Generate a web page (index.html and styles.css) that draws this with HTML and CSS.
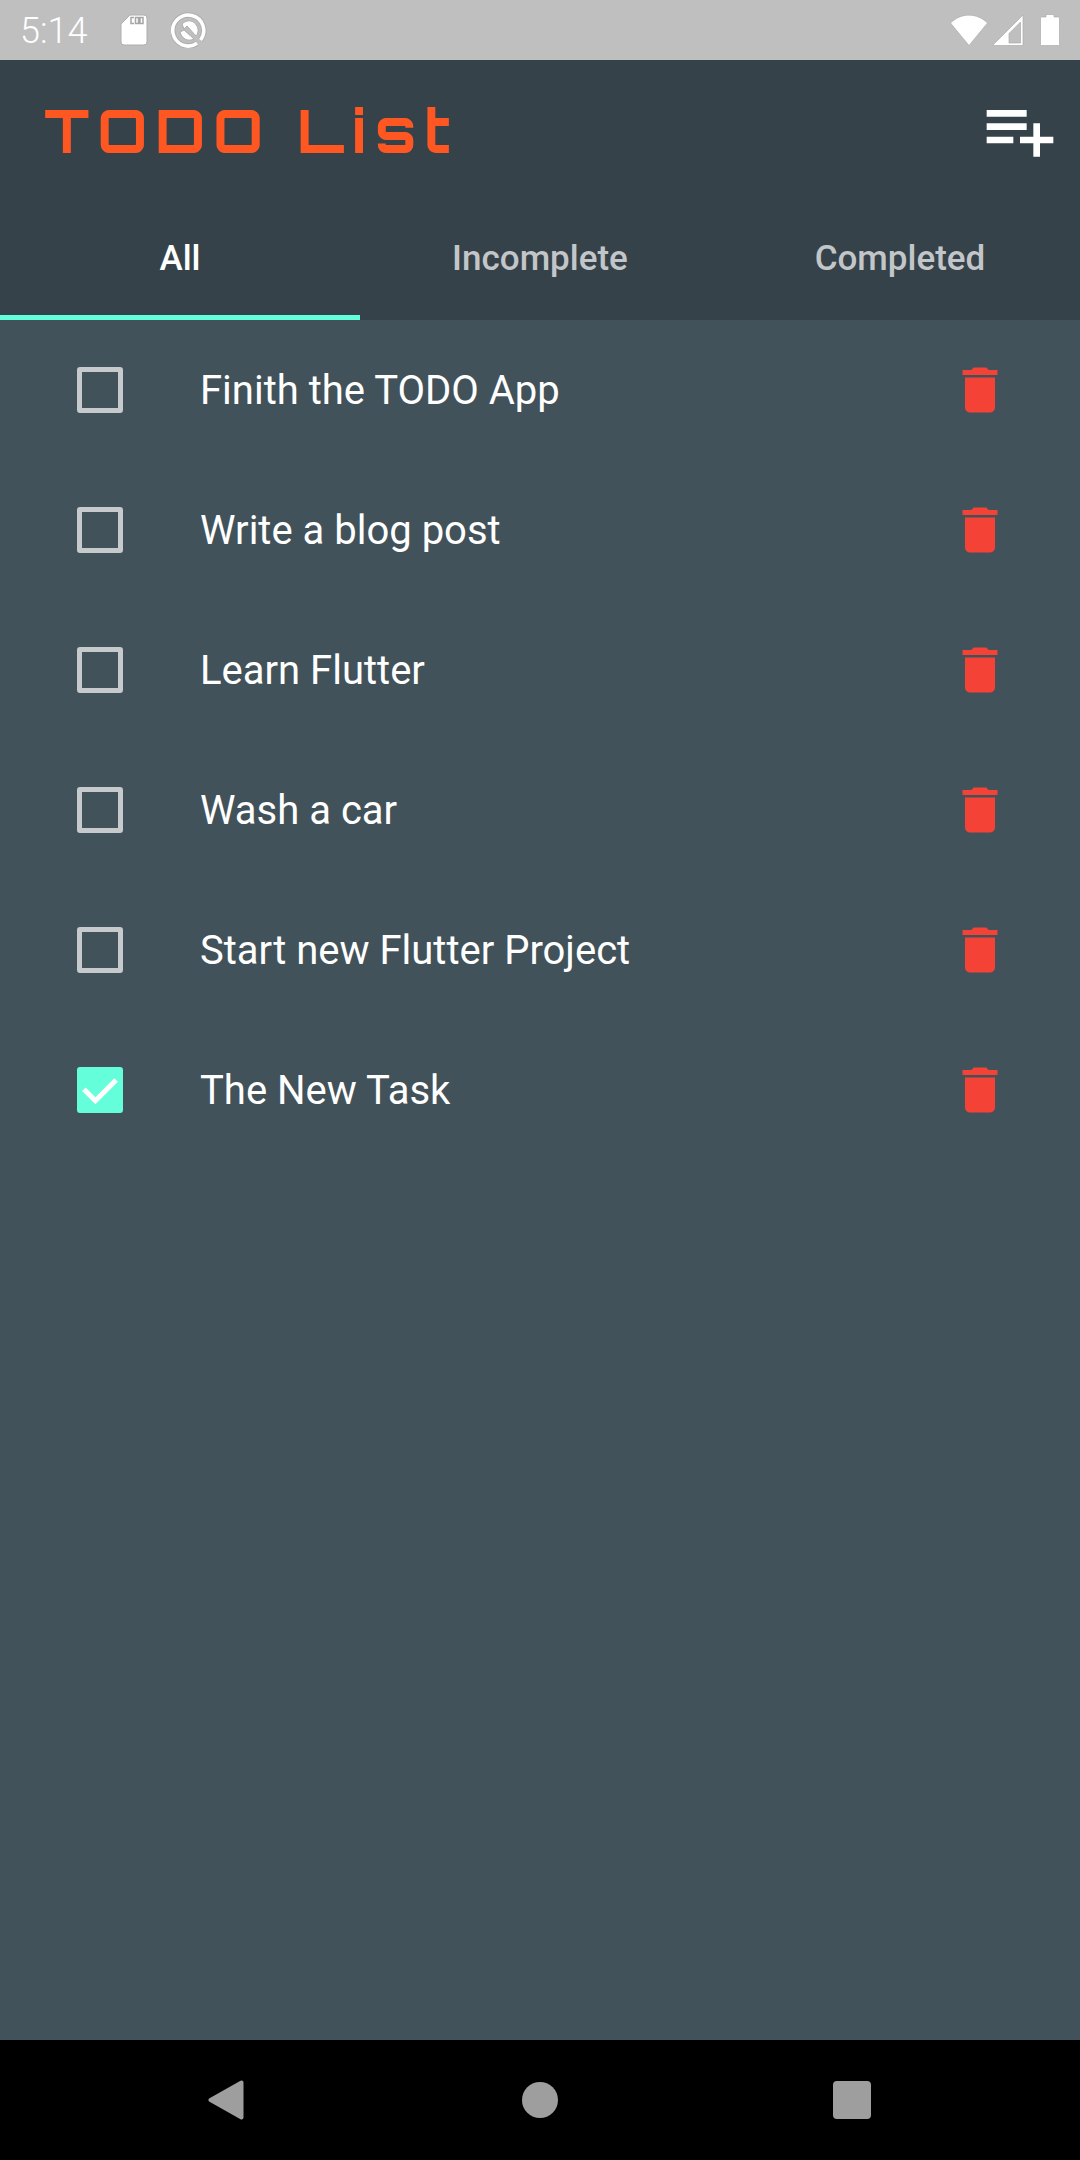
FILE: index.html
```html
<!DOCTYPE html>
<html lang="en">
<head>
  <meta charset="utf-8">
  <meta name="viewport" content="width=device-width, initial-scale=1">
  <title>TODO List</title>
  <link rel="stylesheet" href="styles.css">
</head>
<body>
  <svg class="sprite" aria-hidden="true">
    <symbol id="trash" viewBox="0 0 24 24"><path d="M6 19c0 1.1.9 2 2 2h8c1.1 0 2-.9 2-2V7H6v12zM19 4h-3.5l-1-1h-5l-1 1H5v2h14V4z"/></symbol>
  </svg>

  <div class="status-bar">
    <div class="status-group">
      <time class="clock">5:14</time>
      <svg class="sd-icon" viewBox="0 0 28 32" aria-hidden="true">
        <path d="M10 1H24a3 3 0 0 1 3 3V28a3 3 0 0 1-3 3H4a3 3 0 0 1-3-3V10z" fill="#fff" stroke="#aeaeae"/>
        <path d="M14 3.500h-3v6h3M15.500 3.500h3v6h-3zM20 3.500h3v6h-3z" fill="none" stroke="#a6a6a6" stroke-width="1.500"/>
      </svg>
      <svg class="debug-icon" viewBox="0 0 36 36" aria-hidden="true">
        <path d="M29.500 28A15.500 15.500 0 1 0 26 31.300" fill="none" stroke="#aeaeae" stroke-width="5.500"/>
        <path d="M29.500 28A15.500 15.500 0 1 0 26 31.300" fill="none" stroke="#fff" stroke-width="3.500"/>
        <path d="M11 12C16 7 23 8 26 14c2 4 1 8-1 10L16 14l-3 3z" fill="#fff" stroke="#aeaeae"/>
        <path d="M9 20l4-2 10 9c-6 3-12 0-14-7z" fill="#fff" stroke="#aeaeae"/>
      </svg>
    </div>
    <div class="status-group status-right">
      <svg class="wifi-icon" viewBox="0 0 38 32" aria-hidden="true"><path d="M.5 9C11-1.500 27-1.500 37.500 9L19 31.500z" fill="#fff" stroke="#aeaeae" stroke-width=".7"/></svg>
      <svg class="signal-icon" viewBox="0 0 32 32" aria-hidden="true"><path fill-rule="evenodd" d="M31 1v30.500H.5zM28.500 8L17 19.500V29h11.500z" fill="#fff" stroke="#aeaeae" stroke-width=".7"/></svg>
      <svg class="battery-icon" viewBox="0 0 20 32" aria-hidden="true"><path d="M6 .5h8V3h4.500a1 1 0 0 1 1 1v26.500a1 1 0 0 1-1 1h-17a1 1 0 0 1-1-1V4a1 1 0 0 1 1-1H6z" fill="#fff" stroke="#aeaeae" stroke-width=".7"/></svg>
    </div>
  </div>

  <header class="app-bar">
    <div class="title-row">
      <h1 class="title">TODO List</h1>
      <button class="add-button" type="button" aria-label="Add task">
        <svg class="add-icon" viewBox="0 0 24 24" aria-hidden="true"><path d="M14 10H2v2h12v-2zm0-4H2v2h12V6zm4 8v-4h-2v4h-4v2h4v4h2v-4h4v-2h-4zM2 16h8v-2H2v2z"/></svg>
      </button>
    </div>
    <div class="tabs" role="tablist">
      <button class="tab tab-active" type="button" role="tab" aria-selected="true">All</button>
      <button class="tab" type="button" role="tab" aria-selected="false">Incomplete</button>
      <button class="tab" type="button" role="tab" aria-selected="false">Completed</button>
    </div>
  </header>

  <main class="content">
    <ul class="tasks">
      <li class="task">
        <span class="check-cell"><input class="check" type="checkbox" id="task-1"></span>
        <label class="task-name" for="task-1">Finith the TODO App</label>
        <button class="delete" type="button" aria-label="Delete"><svg class="trash"><use href="#trash"/></svg></button>
      </li>
      <li class="task">
        <span class="check-cell"><input class="check" type="checkbox" id="task-2"></span>
        <label class="task-name" for="task-2">Write a blog post</label>
        <button class="delete" type="button" aria-label="Delete"><svg class="trash"><use href="#trash"/></svg></button>
      </li>
      <li class="task">
        <span class="check-cell"><input class="check" type="checkbox" id="task-3"></span>
        <label class="task-name" for="task-3">Learn Flutter</label>
        <button class="delete" type="button" aria-label="Delete"><svg class="trash"><use href="#trash"/></svg></button>
      </li>
      <li class="task">
        <span class="check-cell"><input class="check" type="checkbox" id="task-4"></span>
        <label class="task-name" for="task-4">Wash a car</label>
        <button class="delete" type="button" aria-label="Delete"><svg class="trash"><use href="#trash"/></svg></button>
      </li>
      <li class="task">
        <span class="check-cell"><input class="check" type="checkbox" id="task-5"></span>
        <label class="task-name" for="task-5">Start new Flutter Project</label>
        <button class="delete" type="button" aria-label="Delete"><svg class="trash"><use href="#trash"/></svg></button>
      </li>
      <li class="task">
        <span class="check-cell">
          <input class="check" type="checkbox" id="task-6" checked>
          <svg class="tick" viewBox="0 0 18 18" aria-hidden="true"><path d="M2.700 8.700L7.200 13.200L15.300 5.100" fill="none" stroke="#fff" stroke-width="2"/></svg>
        </span>
        <label class="task-name" for="task-6">The New Task</label>
        <button class="delete" type="button" aria-label="Delete"><svg class="trash"><use href="#trash"/></svg></button>
      </li>
    </ul>
  </main>

  <nav class="nav-bar" aria-label="System">
    <button class="nav-button" type="button" aria-label="Back"><svg class="nav-icon" viewBox="0 0 40 40"><path d="M33.500 2.500v35L2.500 20z" stroke="#9e9e9e" stroke-width="4" stroke-linejoin="round"/></svg></button>
    <button class="nav-button" type="button" aria-label="Home"><svg class="nav-icon" viewBox="0 0 40 40"><circle cx="20" cy="20" r="18"/></svg></button>
    <button class="nav-button" type="button" aria-label="Recent apps"><svg class="nav-icon" viewBox="0 0 40 40"><rect x="1" y="1" width="38" height="38" rx="4"/></svg></button>
  </nav>
</body>
</html>
```

FILE: styles.css
```css
* {
  box-sizing: border-box;
}

body {
  margin: 0;
  min-height: 100vh;
  display: flex;
  flex-direction: column;
  background: #42525a;
  color: #fff;
  font-family: Roboto, "Liberation Sans", sans-serif;
}

button {
  margin: 0;
  padding: 0;
  border: 0;
  background: none;
  color: inherit;
  font: inherit;
}

svg {
  display: block;
}

.sprite {
  display: none;
}

.status-bar {
  height: 60px;
  padding: 0 20px;
  display: flex;
  align-items: center;
  justify-content: space-between;
  background: #bfbfbf;
}

.status-group {
  display: flex;
  align-items: center;
}

.clock {
  width: 100px;
  padding-top: 2px;
  font-size: 36px;
  font-weight: 300;
  line-height: 40px;
}

.sd-icon {
  width: 28px;
  height: 32px;
}

.debug-icon {
  width: 36px;
  height: 36px;
  margin-left: 23px;
}

.wifi-icon {
  width: 38px;
  height: 32px;
}

.signal-icon {
  width: 32px;
  height: 32px;
  margin-left: 4px;
}

.battery-icon {
  width: 20px;
  height: 32px;
  margin-left: 16px;
}

.app-bar {
  background: #364249;
}

.title-row {
  height: 140px;
  padding: 0 20px 0 44px;
  display: flex;
  align-items: center;
  justify-content: space-between;
}

.title {
  margin: 0;
  color: #ff5722;
  font-family: Orbitron, "DejaVu Sans", sans-serif;
  font-size: 60px;
  font-weight: 700;
  letter-spacing: 8px;
  line-height: 80px;
}

.add-icon {
  width: 80px;
  height: 80px;
  fill: #fff;
}

.tabs {
  display: grid;
  grid-template-columns: repeat(3, 1fr);
}

.tab {
  height: 120px;
  padding-top: 3px;
  border-bottom: 5px solid transparent;
  color: #c3c6c8;
  font-size: 35px;
  font-weight: 500;
  line-height: 40px;
}

.tab-active {
  border-bottom-color: #64ffda;
  color: #fff;
}

.content {
  flex: 1;
}

.tasks {
  margin: 0;
  padding: 0;
  list-style: none;
}

.task {
  height: 140px;
  padding: 0 40px;
  display: flex;
  align-items: center;
}

.check-cell {
  width: 120px;
  display: grid;
  place-items: center;
}

.check {
  appearance: none;
  grid-area: 1 / 1;
  width: 46px;
  height: 46px;
  margin: 0;
  border: 5px solid #c6cacd;
  border-radius: 3px;
}

.check:checked {
  border-color: #64ffda;
  background: #64ffda;
}

.tick {
  grid-area: 1 / 1;
  width: 46px;
  height: 46px;
  pointer-events: none;
}

.task-name {
  flex: 1;
  padding: 2px 0 0 40px;
  font-size: 40px;
  line-height: 48px;
}

.delete {
  width: 120px;
  height: 120px;
  display: grid;
  place-items: center;
}

.trash {
  width: 60px;
  height: 60px;
  fill: #f44336;
}

.nav-bar {
  height: 120px;
  padding: 0 72px;
  display: grid;
  grid-template-columns: repeat(3, 1fr);
  background: #000;
}

.nav-button {
  display: grid;
  place-items: center;
}

.nav-icon {
  width: 40px;
  height: 40px;
  fill: #9e9e9e;
}
```
